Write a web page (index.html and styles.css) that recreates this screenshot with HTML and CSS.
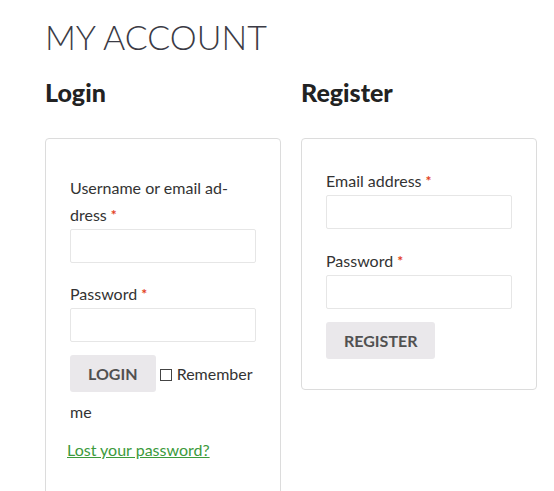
FILE: index.html
```html
<!DOCTYPE html>
<html lang="en">
<head>
  <meta charset="UTF-8">
  <title>My Account</title>
  <link rel="stylesheet" href="styles.css">
</head>
<body>
<main class="account">
  <h1 class="page-title">MY ACCOUNT</h1>

  <div class="columns">
    <!-- Login -->
    <section class="col">
      <h2>Login</h2>
      <form class="account-form login-form">
        <p class="form-row">
          <label>Username or email ad&shy;dress <span class="required">*</span></label>
          <input type="text" class="input-text">
        </p>
        <p class="form-row">
          <label>Password <span class="required">*</span></label>
          <input type="password" class="input-text">
        </p>
        <p class="form-row actions">
          <button type="button" class="button">LOGIN</button>
          <label class="remember"><span class="check"></span>Remember me</label>
        </p>
        <p class="lost-password">
          <a href="#">Lost your password?</a>
        </p>
      </form>
    </section>

    <!-- Register -->
    <section class="col">
      <h2>Register</h2>
      <form class="account-form">
        <p class="form-row">
          <label>Email address <span class="required">*</span></label>
          <input type="email" class="input-text">
        </p>
        <p class="form-row">
          <label>Password <span class="required">*</span></label>
          <input type="password" class="input-text">
        </p>
        <p class="form-row">
          <button type="button" class="button">REGISTER</button>
        </p>
      </form>
    </section>
  </div>
</main>
</body>
</html>
```

FILE: styles.css
```css
body {
    margin: 0;
    font-family: Lato, 'Open Sans', sans-serif;
    font-size: 16px;
    line-height: 27px;
    color: #333;
    background: #fff;
}
.account {
    padding: 0 0 0 45px;
}
.page-title {
    margin: 0;
    padding-top: 15px;
    font-size: 34px;
    line-height: 44px;
    font-weight: 300;
    color: #3b3b45;
}
.columns {
    display: flex;
    gap: 20px;
    align-items: flex-start;
}
.col {
    width: 236px;
}
h2 {
    margin: 18px 0 31px;
    font-size: 25px;
    line-height: 30px;
    font-weight: 900;
    color: #222;
}
.account-form {
    border: 1px solid #dcdcdc;
    border-radius: 4px;
    padding: 28px 24px 24px;
}
.login-form {
    padding-top: 35px;
    padding-bottom: 40px;
}
.form-row {
    margin: 0 0 18px;
}
.form-row label {
    display: block;
    margin-bottom: 1px;
}
.required {
    color: #e2401c;
    font-weight: 700;
    font-size: 14px;
    vertical-align: 1px;
}
.input-text {
    display: block;
    box-sizing: border-box;
    width: 100%;
    height: 34px;
    margin: 0;
    border: 1px solid #e6e6e6;
    border-radius: 2px;
    background: #fff;
}
.login-form .form-row:first-child {
    margin-bottom: 17px;
}
.form-row:has(.input-text) + .form-row:not(:has(.input-text)) {
    margin-top: -5px;
}
.button {
    display: inline-block;
    height: 37px;
    padding: 0 18px;
    margin: 0 0 6px;
    border: none;
    border-radius: 3px;
    background: #eae8eb;
    color: #515151;
    font-family: inherit;
    font-size: 16px;
    font-weight: 700;
    vertical-align: baseline;
}
.form-row:last-child {
    margin-bottom: 0;
}
.form-row .remember {
    display: inline;
    margin-left: 0;
}
.check {
    display: inline-block;
    box-sizing: border-box;
    width: 12px;
    height: 12px;
    border: 1px solid #444;
    margin-right: 5px;
    vertical-align: -1px;
}
.actions {
    margin-bottom: 11px;
}
.lost-password {
    margin: 0;
    margin-left: -3px;
}
.lost-password a {
    color: #3c9a3c;
}
```
